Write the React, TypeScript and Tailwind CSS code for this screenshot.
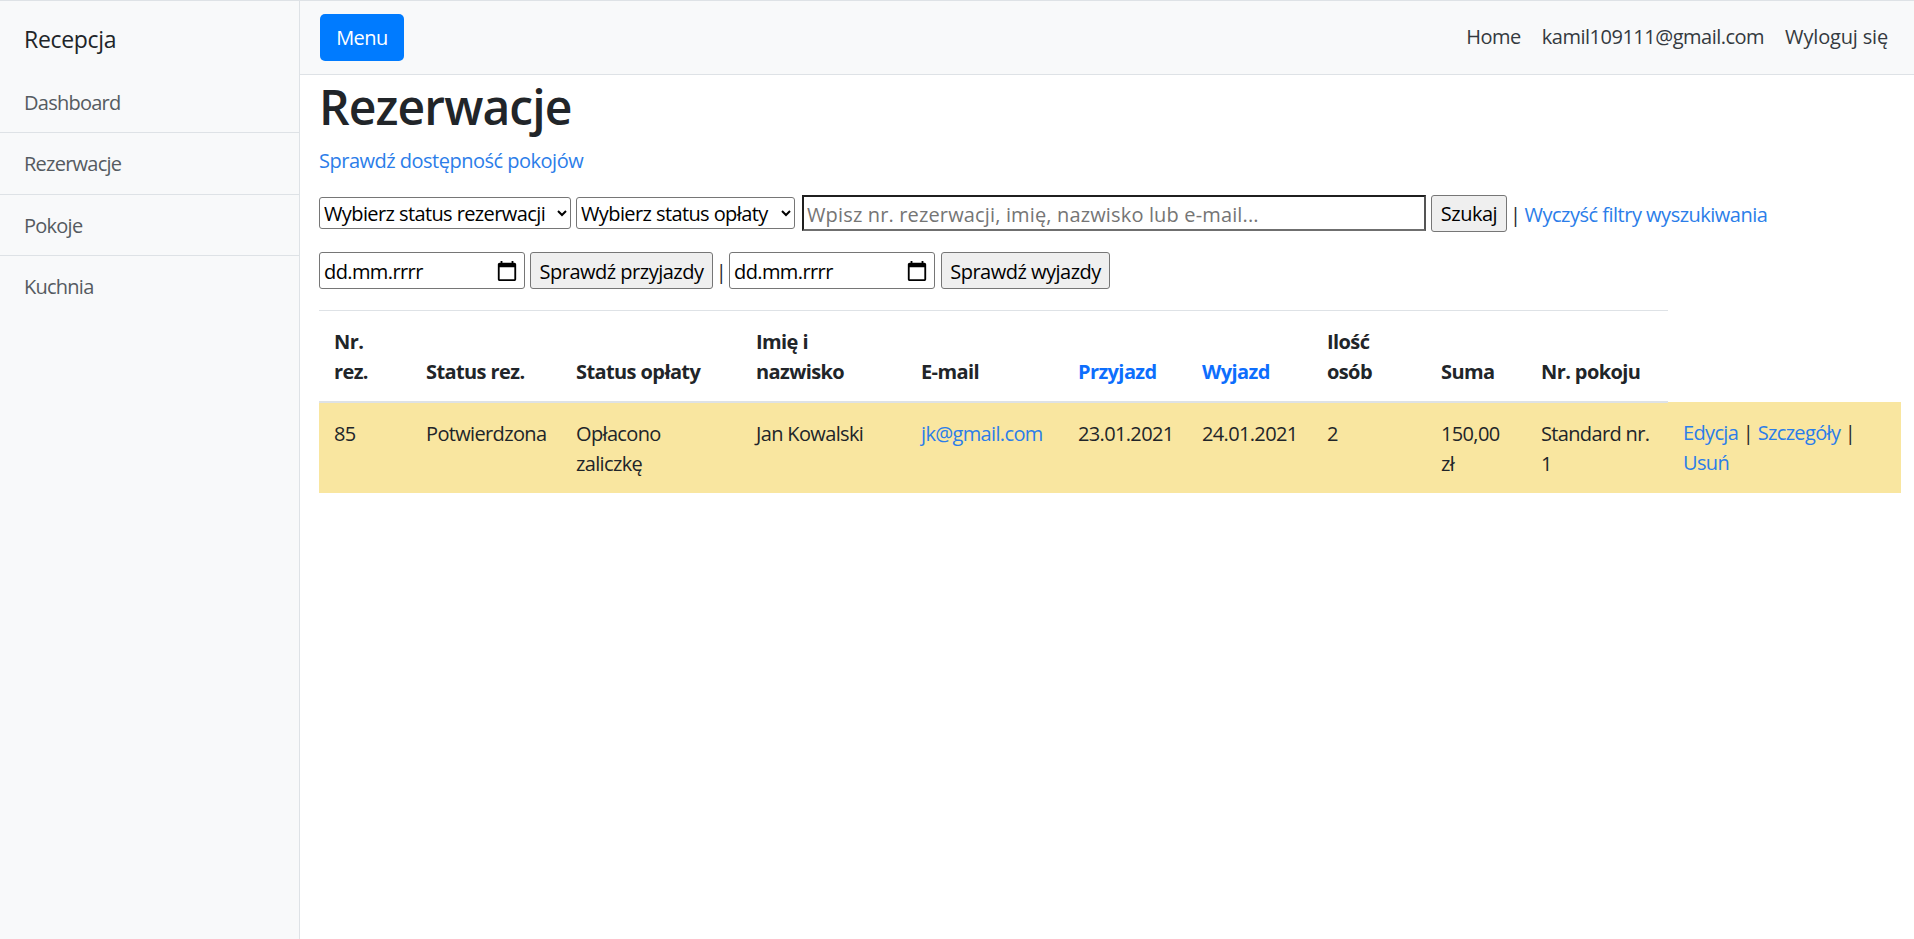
const font = "font-['Open_Sans','Noto_Sans',sans-serif]";

function Calendar() {
  return (
    <svg width="22" height="22" viewBox="0 0 24 24" fill="#000" className="shrink-0">
      <path d="M20 3h-1V1h-2v2H7V1H5v2H4c-1.1 0-2 .9-2 2v16c0 1.1.9 2 2 2h16c1.1 0 2-.9 2-2V5c0-1.1-.9-2-2-2zm0 18H4V8h16v13z" />
    </svg>
  );
}

function DateBox({ w }: { w: string }) {
  return (
    <div className={`${w} h-[37px] flex items-center justify-between border border-[#767676] rounded-[3px] pl-[4px] pr-[6px] bg-white text-black text-[20px] tracking-[-0.6px]`}>
      <span className="pt-[2px]">dd.mm.rrrr</span>
      <Calendar />
    </div>
  );
}

function Btn({ w, children }: { w: string; children: React.ReactNode }) {
  return (
    <button className={`${w} h-[37px] pt-[2px] border border-[#767676] rounded-[3px] bg-[#efefef] text-black text-[20px] tracking-[-0.5px] whitespace-nowrap`}>
      {children}
    </button>
  );
}

const A = ({ children }: { children: React.ReactNode }) => (
  <a className="text-[#2b7de9]">{children}</a>
);

const ths: [string, boolean][] = [
  ["Nr. rez.", false],
  ["Status rez.", false],
  ["Status opłaty", false],
  ["Imię i nazwisko", false],
  ["E-mail", false],
  ["Przyjazd", true],
  ["Wyjazd", true],
  ["Ilość osób", false],
  ["Suma", false],
  ["Nr. pokoju", false],
];

const tds = ["85", "Potwierdzona", "Opłacono zaliczkę", "Jan Kowalski"];
const cell = "pt-[16px] pb-[14px] px-[15px] align-top tracking-[-0.65px]";

export default function App() {
  return (
    <div className={`${font} flex min-h-screen h-[939px] overflow-hidden border-t border-[#dee2e6] text-[#212529] text-[20px] tracking-[-0.5px] leading-[30px] bg-white`}>
      <aside className="w-[300px] shrink-0 bg-[#f8f9fa] border-r border-[#dee2e6]">
        <div className="h-[71px] pl-[24px] pt-[4px] flex items-center text-[23px] tracking-[-0.3px]">Recepcja</div>
        <ul className="text-[#555b61] tracking-[-0.75px]">
          {["Dashboard", "Rezerwacje", "Pokoje", "Kuchnia"].map((t, i) => (
            <li key={t} className={`h-[61.3px] pl-[24px] pt-[2px] flex items-center ${i < 3 ? "border-b border-[#dee2e6]" : "pb-[2px]"}`}>{t}</li>
          ))}
        </ul>
      </aside>
      <main className="flex-1 min-w-0">
        <nav className="h-[74px] bg-[#f8f9fa] border-b border-[#dee2e6] pl-[20px] pr-[26px] flex items-center justify-between">
          <button className="w-[84px] h-[47px] rounded-[5px] bg-[#007bff] text-white">Menu</button>
          <div className="flex gap-[21px] text-[#343a40] pb-[2px]">
            <span>Home</span>
            <span>kamil109111@gmail.com</span>
            <span className="tracking-[-0.17px]">Wyloguj się</span>
          </div>
        </nav>
        <div className="pl-[19px] pr-[14px]">
          <h1 className="text-[48px] font-semibold leading-[60px] mt-[2px] tracking-[-0.9px]">Rezerwacje</h1>
          <p className="mt-[9px]"><A>Sprawdź dostępność pokojów</A></p>
          <div className="mt-[19px] flex items-center h-[36px]">
            <select className="w-[252px] h-[32px] pt-[1px] border border-[#767676] rounded-[3px] bg-white text-black text-[20px] tracking-[-0.6px]">
              <option>Wybierz status rezerwacji</option>
            </select>
            <select className="w-[219px] ml-[5px] h-[32px] pt-[1px] border border-[#767676] rounded-[3px] bg-white text-black text-[20px] tracking-[-0.6px]">
              <option>Wybierz status opłaty</option>
            </select>
            <input
              className="w-[624px] ml-[7px] h-[36px] pt-[2px] border-2 border-t-[#1f1f1f] border-l-[#1f1f1f] border-r-[#555] border-b-[#6f6f6f] px-[3px] text-[20px] tracking-[0.15px] placeholder:text-[#757575]"
              placeholder="Wpisz nr. rezerwacji, imię, nazwisko lub e-mail..."
            />
            <Btn w="w-[76px] ml-[5px]">Szukaj</Btn>
            <span className="ml-[3px] mr-[4px] pt-[3px]">|</span>
            <span className="pt-[3px]"><A>Wyczyść filtry wyszukiwania</A></span>
          </div>
          <div className="mt-[21px] flex items-center">
            <DateBox w="w-[206px]" />
            <Btn w="w-[183px] ml-[5px]">Sprawdź przyjazdy</Btn>
            <span className="w-[16px] text-center pt-[2px]">|</span>
            <DateBox w="w-[206px]" />
            <Btn w="w-[169px] ml-[6px]">Sprawdź wyjazdy</Btn>
          </div>
          <table className="mt-[21px] table-fixed w-[1582px] border-collapse">
            <colgroup>
              <col className="w-[92px]" />
              <col className="w-[150px]" />
              <col className="w-[180px]" />
              <col className="w-[165px]" />
              <col className="w-[157px]" />
              <col className="w-[124px]" />
              <col className="w-[125px]" />
              <col className="w-[114px]" />
              <col className="w-[100px]" />
              <col className="w-[142px]" />
              <col className="w-[233px]" />
            </colgroup>
            <thead>
              <tr>
                {ths.map(([t, link]) => (
                  <th key={t} className={`pt-[16px] pb-[14px] px-[15px] align-bottom text-left font-bold tracking-[-0.6px] border-t border-[#dee2e6] border-b-2 ${link ? "text-[#0d6efd]" : ""}`}>{t}</th>
                ))}
              </tr>
            </thead>
            <tbody>
              <tr className="bg-[#f9e6a0]">
                {tds.map((t) => (
                  <td key={t} className={cell}>{t}</td>
                ))}
                <td className={cell}><A>jk@gmail.com</A></td>
                <td className={cell}>23.01.2021</td>
                <td className={cell}>24.01.2021</td>
                <td className={cell}>2</td>
                <td className={cell}>150,00 zł</td>
                <td className={cell}>Standard nr. 1</td>
                <td className={cell}><A>Edycja</A> | <A>Szczegóły</A> | <A>Usuń</A></td>
              </tr>
            </tbody>
          </table>
        </div>
      </main>
    </div>
  );
}
